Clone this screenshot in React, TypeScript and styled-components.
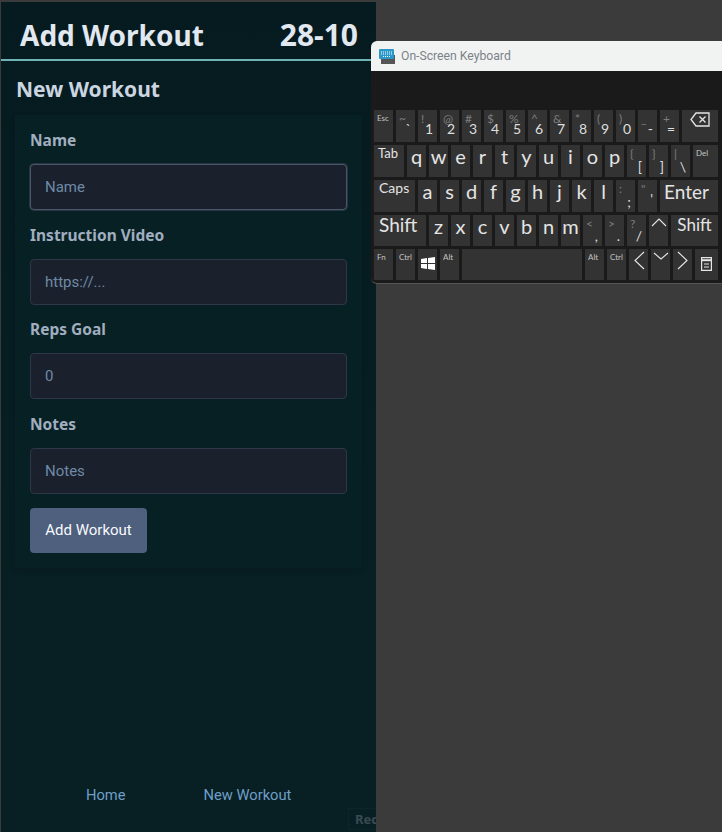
import React from "react";
import styled, { createGlobalStyle } from "styled-components";

const bodyFont = `Roboto, "Noto Sans", sans-serif`;
const headFont = `"Noto Sans", "Open Sans", sans-serif`;
const keyFont = `Lato, "Noto Sans", sans-serif`;

const GlobalStyle = createGlobalStyle`
  html, body {
    margin: 0;
    padding: 0;
    height: 832px;
    overflow: hidden;
    background: #3b3b3b;
    font-family: ${bodyFont};
  }
  * { box-sizing: border-box; }
`;

const Desktop = styled.div`
  position: relative;
  width: 722px;
  height: 832px;
  padding: 2px 0 0 1px;
  overflow: hidden;
  background: #3b3b3b;
`;

const Phone = styled.div`
  position: relative;
  display: flex;
  flex-direction: column;
  width: 375px;
  height: 830px;
  overflow: hidden;
  background: linear-gradient(180deg, #051b1f 0%, #071e22 60%, #082024 100%);
`;

const Header = styled.header`
  display: flex;
  align-items: center;
  justify-content: space-between;
  height: 59px;
  padding: 8px 18px 0 19px;
  border-bottom: 2px solid #6fb3b6;
`;

const HeaderText = styled.h1<{ $size: number }>`
  margin: 0;
  font-family: ${headFont};
  font-size: ${(p) => p.$size}px;
  font-weight: 700;
  color: #e2e8f0;
`;

const PageTitle = styled.h2`
  margin: 14px 0 0 15px;
  font-family: ${headFont};
  font-size: 21px;
  line-height: 28px;
  font-weight: 700;
  color: #cbd5e0;
`;

const Card = styled.form`
  display: flex;
  flex-direction: column;
  align-items: flex-start;
  width: 347px;
  margin: 12px 0 0 14px;
  padding: 15px;
  background: #072023;
  box-shadow: 0 2px 6px rgba(0, 0, 0, 0.12);
`;

const Label = styled.label<{ $first?: boolean }>`
  font-family: ${headFont};
  font-size: 15.5px;
  line-height: 20px;
  font-weight: 700;
  color: #a0aec0;
  margin-top: ${(p) => (p.$first ? "0" : "14.5px")};
`;

const Input = styled.input<{ $focused?: boolean }>`
  display: block;
  width: 317px;
  height: 46px;
  margin-top: 14px;
  padding: 0 0 0 14px;
  font: 400 15px ${bodyFont};
  color: #e2e8f0;
  background: #1a202c;
  border: 1px solid ${(p) => (p.$focused ? "#4a5568" : "#2d3748")};
  box-shadow: ${(p) => (p.$focused ? "0 0 0 1px rgba(74, 85, 104, 0.45)" : "none")};
  border-radius: 4px;
  outline: none;
  &::placeholder { color: #6f8aa6; opacity: 1; }
`;

const SubmitButton = styled.button`
  width: 117px;
  height: 45px;
  margin-top: 14px;
  font: 400 15px ${bodyFont};
  color: #f7fafc;
  background: #4f5f7e;
  border: none;
  border-radius: 4px;
`;

const Nav = styled.nav`
  display: flex;
  gap: 78px;
  margin-top: auto;
  padding: 0 0 27px 85px;
`;

const NavLink = styled.a`
  font-size: 14.7px;
  line-height: 20px;
  color: #6f9fc8;
`;

const ReqBadge = styled.div`
  position: absolute;
  right: -10px;
  bottom: 2px;
  width: 38px;
  height: 22px;
  padding: 0 6px;
  font-family: ${headFont};
  font-size: 13px;
  line-height: 21px;
  font-weight: 700;
  color: #3a4a52;
  border: 1px solid #0c2529;
`;

const KeyboardWindow = styled.div`
  position: absolute;
  left: 371px;
  top: 41px;
  width: 351px;
  height: 243px;
  overflow: hidden;
  background: #1a1a1a;
  border-radius: 6px 0 0 6px;
  border-bottom: 1px solid #555;
  font-family: ${keyFont};
`;

const TitleBar = styled.div`
  display: flex;
  align-items: center;
  gap: 6px;
  height: 30px;
  padding-left: 8px;
  background: #f1f3f3;
  font-family: ${bodyFont};
  font-size: 12.2px;
  color: #7c8287;
`;

const Keys = styled.div`
  display: flex;
  flex-direction: column;
  gap: 3px;
  padding: 39px 4px 0 3px;
`;

const KeyRow = styled.div<{ $h?: number }>`
  display: flex;
  gap: 3px;
  height: ${(p) => p.$h ?? 32}px;
`;

const Key = styled.div<{ $w?: number; $size?: number; $pad?: string; $lh?: number }>`
  display: flex;
  flex: 0 0 ${(p) => p.$w ?? 19}px;
  justify-content: ${(p) => (p.$pad ? "flex-start" : "center")};
  align-items: flex-start;
  height: 100%;
  padding: ${(p) => p.$pad ?? "0"};
  background: #333333;
  color: #e4e4e4;
  font-size: ${(p) => p.$size ?? 20}px;
  line-height: ${(p) => p.$lh ?? 22}px;
  white-space: nowrap;
`;

const SmallKey = styled(Key)`
  padding: 3px 0 0 3px;
  justify-content: flex-start;
  font-size: 8px;
  line-height: 11px;
  color: #c4c4c4;
`;

const SymbolKey = styled(Key)`
  position: relative;
`;

const Shifted = styled.span`
  position: absolute;
  left: 3px;
  top: 3px;
  font-size: 12px;
  line-height: 12px;
  color: #7d7d7d;
`;

const Main = styled.span<{ $low?: boolean }>`
  position: absolute;
  right: 4px;
  bottom: ${(p) => (p.$low ? 4 : 7)}px;
  font-size: 14px;
  line-height: 12px;
  color: #dedede;
`;

const IconKey = styled(Key)<{ $top?: number }>`
  padding-top: ${(p) => p.$top ?? 2}px;
`;

const number: [string, string][] = [
  ["~", "`"], ["!", "1"], ["@", "2"], ["#", "3"], ["$", "4"], ["%", "5"],
  ["^", "6"], ["&", "7"], ["*", "8"], ["(", "9"], [")", "0"], ["_", "-"], ["+", "="],
];

const Sym = ({ top, main, low }: { top: string; main: string; low?: boolean }) => (
  <SymbolKey>
    <Shifted>{top}</Shifted>
    <Main $low={low}>{main}</Main>
  </SymbolKey>
);

const Letters = ({ chars }: { chars: string }) => (
  <>
    {chars.split("").map((c) => (
      <Key key={c}>{c}</Key>
    ))}
  </>
);

const Chevron = ({ d, w = 16, h = 20 }: { d: string; w?: number; h?: number }) => (
  <svg width={w} height={h} viewBox="0 0 16 20" fill="none" stroke="#e6e6e6" strokeWidth="1.1">
    <path d={d} />
  </svg>
);

const KeyboardIcon = () => (
  <svg width="16" height="15" viewBox="0 0 16 15">
    <rect x="2" y="6" width="14" height="9" fill="#555" />
    <rect x="0" y="0" width="15" height="10" rx="1" fill="#2a98c8" />
    <path d="M2 3h11M2 5h11M4 7.5h7" stroke="#fff" strokeWidth="1" strokeDasharray="1 1" />
  </svg>
);

const BackspaceIcon = () => (
  <svg width="20" height="15" viewBox="0 0 20 15" fill="none" stroke="#e6e6e6" strokeWidth="1.3">
    <path d="M6 1h13v13H6L1 7.5z" />
    <path d="M9.5 4.5l6 6M15.5 4.5l-6 6" />
  </svg>
);

const WinIcon = () => (
  <svg width="14" height="13" viewBox="0 0 14 13" fill="#fff">
    <path d="M0 2l6-1v5H0zM7 .9L14 0v6H7zM0 7h6v5L0 11zM7 7h7v6l-7-1z" />
  </svg>
);

const MenuIcon = () => (
  <svg width="11" height="14" viewBox="0 0 11 14" fill="none" stroke="#e6e6e6" strokeWidth="1.2">
    <path d="M.6.6h9.8v12.8H.6z" />
    <path d="M.6 3.2h9.8" strokeWidth="2" />
    <path d="M3 7h5M3 10h5" />
  </svg>
);

export default function App() {
  return (
    <Desktop>
      <GlobalStyle />
      <Phone>
        <Header>
          <HeaderText $size={28}>Add Workout</HeaderText>
          <HeaderText $size={30}>28-10</HeaderText>
        </Header>
        <PageTitle>New Workout</PageTitle>
        <Card>
          <Label $first>Name</Label>
          <Input $focused placeholder="Name" />
          <Label>Instruction Video</Label>
          <Input placeholder="https://..." />
          <Label>Reps Goal</Label>
          <Input placeholder="0" />
          <Label>Notes</Label>
          <Input placeholder="Notes" />
          <SubmitButton type="button">Add Workout</SubmitButton>
        </Card>
        <Nav>
          <NavLink>Home</NavLink>
          <NavLink>New Workout</NavLink>
        </Nav>
        <ReqBadge>Req</ReqBadge>
      </Phone>

      <KeyboardWindow>
        <TitleBar>
          <KeyboardIcon />
          On-Screen Keyboard
        </TitleBar>
        <Keys>
          <KeyRow>
            <SmallKey>Esc</SmallKey>
            {number.map(([t, m]) => (
              <Sym key={m} top={t} main={m} />
            ))}
            <IconKey $w={36}><BackspaceIcon /></IconKey>
          </KeyRow>
          <KeyRow>
            <Key $w={30} $size={13} $lh={16} $pad="0 0 0 4px">Tab</Key>
            <Letters chars="qwertyuiop" />
            <Sym low top="{" main="[" />
            <Sym low top="}" main="]" />
            <Sym low top="|" main="\" />
            <SmallKey $w={25}>Del</SmallKey>
          </KeyRow>
          <KeyRow>
            <Key $w={41} $size={14} $lh={16} $pad="0 0 0 5px">Caps</Key>
            <Letters chars="asdfghjkl" />
            <Sym low top=":" main=";" />
            <Sym top={'"'} main="'" />
            <Key $w={58} $size={19} $lh={24} $pad="0 0 0 4px">Enter</Key>
          </KeyRow>
          <KeyRow $h={31}>
            <Key $w={52} $size={19} $lh={20} $pad="0 0 0 5px">Shift</Key>
            <Letters chars="zxcvbnm" />
            <Sym low top="<" main="," />
            <Sym low top=">" main="." />
            <Sym low top="?" main="/" />
            <IconKey><Chevron d="M1 9l7-7 7 7" /></IconKey>
            <Key $w={47} $size={17} $lh={20}>Shift</Key>
          </KeyRow>
          <KeyRow $h={31}>
            <SmallKey>Fn</SmallKey>
            <SmallKey>Ctrl</SmallKey>
            <IconKey $top={8}><WinIcon /></IconKey>
            <SmallKey>Alt</SmallKey>
            <Key $w={120} />
            <SmallKey>Alt</SmallKey>
            <SmallKey>Ctrl</SmallKey>
            <IconKey><Chevron d="M13 1L4 9.5l9 8.5" /></IconKey>
            <IconKey><Chevron d="M1 2l7 6 7-6" /></IconKey>
            <IconKey><Chevron d="M3 1l9 8.5L3 18" /></IconKey>
            <IconKey $w={23} $top={8}><MenuIcon /></IconKey>
          </KeyRow>
        </Keys>
      </KeyboardWindow>
    </Desktop>
  );
}
